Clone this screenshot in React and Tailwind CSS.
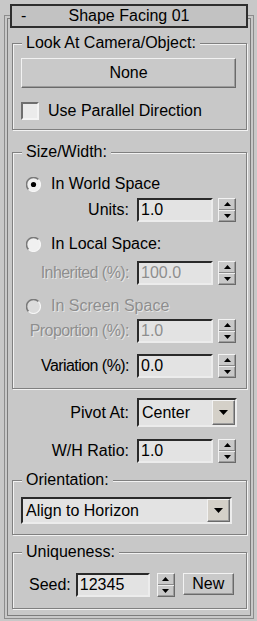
import React from "react";

const sunken =
  "border-2 border-t-[#2a2a2a] border-l-[#2a2a2a] border-b-[#ececec] border-r-[#ececec] bg-[#e3e3e3]";
const raised =
  "border border-t-[#f2f2f2] border-l-[#f2f2f2] border-b-[#6a6a6a] border-r-[#6a6a6a] shadow-[inset_-1px_-1px_0_#9c9c9c]";
const disabledText = "text-[#8e8e8e] [text-shadow:1px_1px_0_#e6e6e6]";

const Spinner = () => (
  <div className={`flex h-[24px] w-[18px] flex-col bg-[#c8c8c8] ${raised}`}>
    <div className="flex flex-1 items-center justify-center border-b border-b-[#8a8a8a]">
      <svg width="7" height="4" viewBox="0 0 7 4">
        <path d="M3.5 0 L7 4 L0 4 Z" fill="#000" />
      </svg>
    </div>
    <div className="flex flex-1 items-center justify-center border-t border-t-[#eeeeee]">
      <svg width="7" height="4" viewBox="0 0 7 4">
        <path d="M0 0 L7 0 L3.5 4 Z" fill="#000" />
      </svg>
    </div>
  </div>
);

const Field = ({ value, width = "w-[76px]", disabled }) => (
  <div
    className={`flex h-[24px] items-center pl-[2px] leading-none ${width} ${sunken} ${
      disabled ? disabledText : "text-black"
    }`}
  >
    {value}
  </div>
);

// labels with "(%)" are set a touch tighter, as in the original dialog font
const SpinRow = ({ label, value, disabled, labelWidth = "w-[116px]", tight }) => (
  <div className="flex h-[24px] items-center">
    <div
      className={`text-right leading-none ${labelWidth} ${tight ? "tracking-[-0.55px]" : ""} ${
        disabled ? disabledText : ""
      }`}
    >
      {label}
    </div>
    <div className="ml-[8px]">
      <Field value={value} disabled={disabled} />
    </div>
    <div className="ml-[5px]">
      <Spinner />
    </div>
  </div>
);

const Dropdown = ({ value, size }) => (
  <div className={`flex items-stretch ${size} ${sunken}`}>
    <div className="flex flex-1 items-center pl-[3px] leading-none">{value}</div>
    <div className={`flex w-[23px] items-center justify-center bg-[#d4d0c8] ${raised}`}>
      <svg width="9" height="5" viewBox="0 0 9 5">
        <path d="M0 0 L9 0 L4.5 5 Z" fill="#000" />
      </svg>
    </div>
  </div>
);

const Radio = ({ checked, disabled }) => (
  <svg width="15" height="15" viewBox="0 0 15 15">
    <circle cx="7.5" cy="7.5" r="7" fill={disabled ? "#dcdcdc" : "#f0f0f0"} />
    <path d="M2.55 12.45 A7 7 0 0 1 12.45 2.55" stroke="#7a7a7a" strokeWidth="1.6" fill="none" />
    <path d="M12.45 2.55 A7 7 0 0 1 2.55 12.45" stroke="#f6f6f6" strokeWidth="1.2" fill="none" />
    {checked && <circle cx="7.5" cy="7.5" r="2.6" fill="#000" />}
  </svg>
);

const RadioRow = ({ label, checked, disabled, className = "" }) => (
  <div className={`flex h-[18px] items-center pl-[13px] ${className}`}>
    <Radio checked={checked} disabled={disabled} />
    <span className={`ml-[10px] leading-none ${disabled ? disabledText : ""}`}>{label}</span>
  </div>
);

const Group = ({ label, className = "", children }) => (
  <div
    className={`ml-[7px] w-[235px] border border-[#808080] shadow-[inset_1px_1px_0_#f2f2f2,1px_1px_0_#f2f2f2] ${className}`}
  >
    <div className="-mt-[10px] ml-[9px] w-fit bg-[#c8c8c8] px-[4px] leading-[18px]">{label}</div>
    {children}
  </div>
);

export default function App() {
  return (
    <div className="h-[621px] w-[257px] overflow-hidden bg-[#c8c8c8] pt-[15px] font-['Liberation_Sans',Arial,sans-serif] text-[16px] text-black">
      <div className="ml-[4px] h-[604px] w-[250px] border border-[#8c8c8c] shadow-[inset_0_0_0_2px_#c8c8c8,inset_0_0_0_3px_#7c7c7c]">
        {/* rollout title */}
        <div className="-mt-[12px] ml-[5px] flex h-[24px] w-[238px] items-center border-2 border-[#2e2e2e] bg-[#c2c2c2] leading-none">
          <span className="w-[24px] pl-[9px]">-</span>
          <span className="flex-1 text-center">Shape Facing 01</span>
          <span className="w-[24px]" />
        </div>

        <Group label="Look At Camera/Object:" className="mt-[15px] pb-[9px]">
          <button
            className={`ml-[8px] mt-[6px] flex h-[30px] w-[215px] items-center justify-center bg-[#c9c9c9] leading-none ${raised}`}
          >
            None
          </button>
          <div className="ml-[8px] mt-[14px] flex h-[18px] items-center">
            <div className="h-[18px] w-[18px] border-2 border-t-[#6e6e6e] border-l-[#6e6e6e] border-b-[#f4f4f4] border-r-[#f4f4f4] bg-[#ebebeb]" />
            <span className="ml-[9px] leading-none">Use Parallel Direction</span>
          </div>
        </Group>

        <Group label="Size/Width:" className="mt-[22px] pb-[10px]">
          <RadioRow label="In World Space" checked className="mt-[14px]" />
          <div className="mt-[5px]">
            <SpinRow label="Units:" value="1.0" />
          </div>
          <RadioRow label="In Local Space:" className="mt-[13px]" />
          <div className="mt-[8px]">
            <SpinRow label="Inherited (%):" value="100.0" disabled tight />
          </div>
          <RadioRow label="In Screen Space" disabled className="mt-[12px]" />
          <div className="mt-[4px]">
            <SpinRow label="Proportion (%):" value="1.0" disabled tight />
          </div>
          <div className="mt-[11px]">
            <SpinRow label="Variation (%):" value="0.0" tight />
          </div>
        </Group>

        <div className="mt-[9px] flex h-[29px] items-center">
          <div className="w-[124px] text-right leading-none">Pivot At:</div>
          <div className="ml-[8px]">
            <Dropdown value="Center" size="w-[100px] h-[29px]" />
          </div>
        </div>
        <div className="mt-[12px]">
          <SpinRow label="W/H Ratio:" value="1.0" labelWidth="w-[124px]" />
        </div>

        <Group label="Orientation:" className="mt-[17px] pb-[10px]">
          <div className="ml-[8px] mt-[8px]">
            <Dropdown value="Align to Horizon" size="w-[211px] h-[27px]" />
          </div>
        </Group>

        <Group label="Uniqueness:" className="mt-[17px] pb-[11px]">
          <div className="mt-[12px] flex items-start pl-[16px]">
            <span className="flex h-[24px] items-center leading-none">Seed:</span>
            <div className="ml-[5px]">
              <Field value="12345" width="w-[74px]" />
            </div>
            <div className="ml-[7px]">
              <Spinner />
            </div>
            <button
              className={`ml-[8px] flex h-[22px] w-[51px] items-center justify-center bg-[#c9c9c9] leading-none ${raised}`}
            >
              New
            </button>
          </div>
        </Group>
      </div>
    </div>
  );
}
